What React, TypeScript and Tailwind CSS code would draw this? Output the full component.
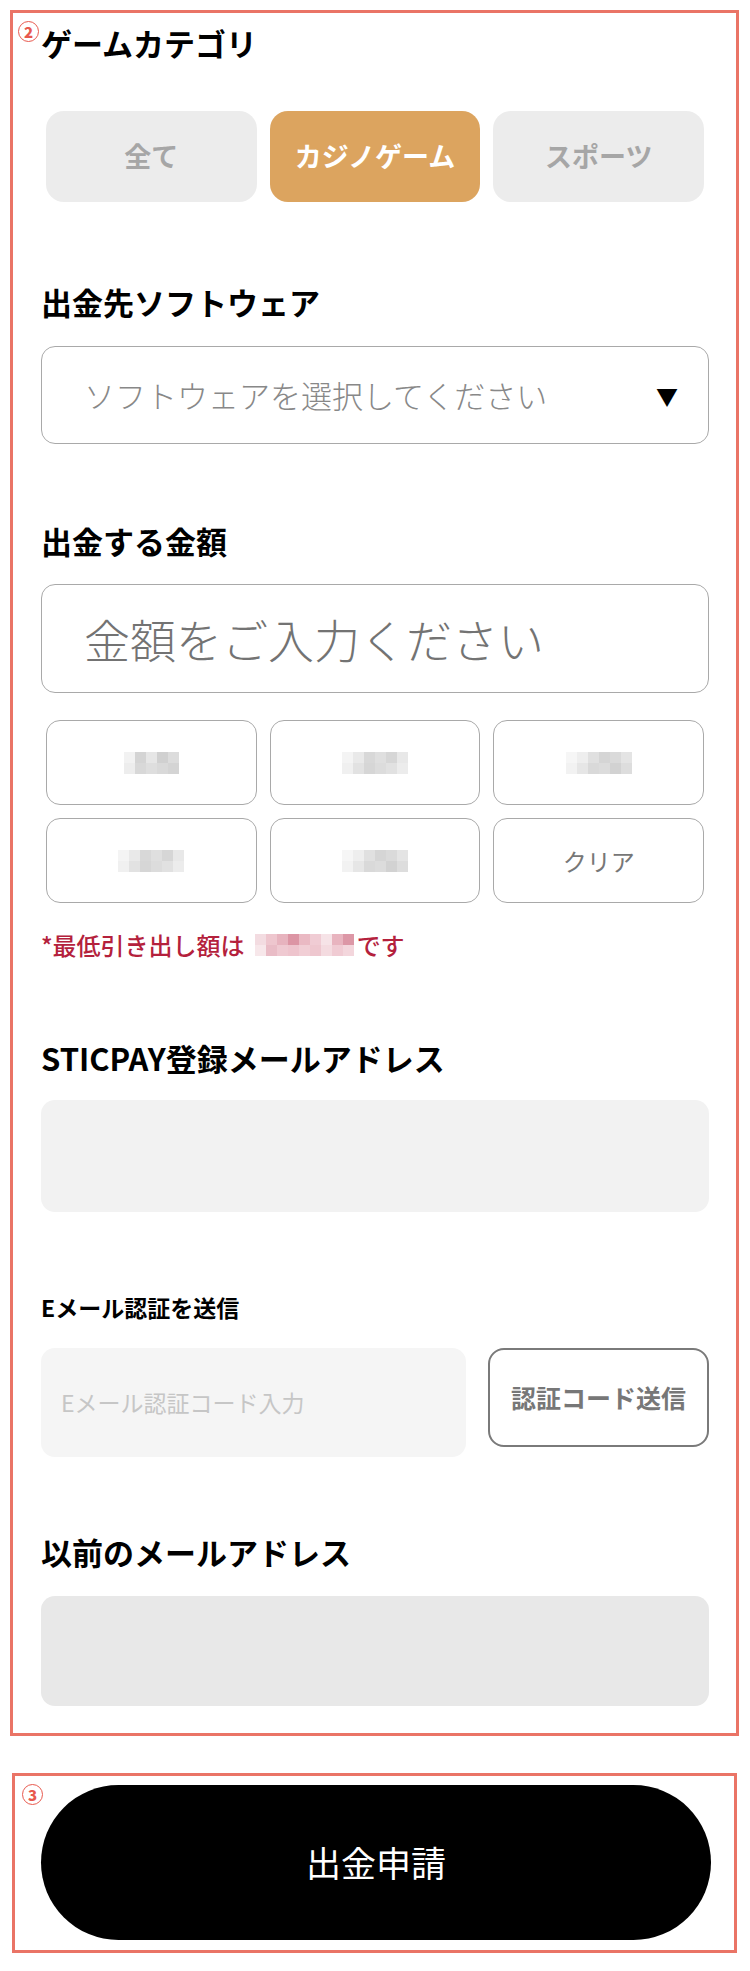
import React from 'react';

const jp = { fontFamily: '"Noto Sans CJK JP", "Noto Sans", sans-serif' };

// pixelated (censored) amount, drawn as little squares
function Mosaic({ cells }: { cells: string[][] }) {
  return (
    <div className="flex flex-col">
      {cells.map((row, i) => (
        <div key={i} className="flex">
          {row.map((c, j) => (
            <div key={j} className={`h-[11px] w-[11px] ${c}`} />
          ))}
        </div>
      ))}
    </div>
  );
}

const grayA = [
  ['bg-[#f2f2f2]', 'bg-[#d4d4d4]', 'bg-[#e6e6e6]', 'bg-[#d0d0d0]', 'bg-[#dcdcdc]'],
  ['bg-[#ededed]', 'bg-[#d8d8d8]', 'bg-[#dedede]', 'bg-[#d9d9d9]', 'bg-[#d4d4d4]'],
];
const grayB = [
  ['bg-[#f4f4f4]', 'bg-[#e9e9e9]', 'bg-[#d8d8d8]', 'bg-[#dfdfdf]', 'bg-[#d6d6d6]', 'bg-[#e8e8e8]'],
  ['bg-[#f0f0f0]', 'bg-[#e2e2e2]', 'bg-[#d6d6d6]', 'bg-[#dcdcdc]', 'bg-[#e1e1e1]', 'bg-[#ececec]'],
];
const grayC = [
  ['bg-[#f6f6f6]', 'bg-[#eeeeee]', 'bg-[#e0e0e0]', 'bg-[#d5d5d5]', 'bg-[#dadada]', 'bg-[#e4e4e4]'],
  ['bg-[#f2f2f2]', 'bg-[#e6e6e6]', 'bg-[#d9d9d9]', 'bg-[#dcdcdc]', 'bg-[#d2d2d2]', 'bg-[#dddddd]'],
];
const pink = [
  ['bg-[#f3dce1]', 'bg-[#eec6ce]', 'bg-[#e7b3be]', 'bg-[#dc95a4]', 'bg-[#eab9c3]', 'bg-[#f0ccd4]', 'bg-[#f6e3e7]', 'bg-[#e8b4bf]', 'bg-[#dc97a6]'],
  ['bg-[#f7e7ea]', 'bg-[#e9bcc6]', 'bg-[#efc9d1]', 'bg-[#eec4cd]', 'bg-[#f1ced5]', 'bg-[#eec7cf]', 'bg-[#f4dbe0]', 'bg-[#f0cbd3]', 'bg-[#f3d6dc]'],
];

function Circled({ n }: { n: string }) {
  return (
    <span className="flex h-[21px] w-[21px] items-center justify-center rounded-full border-[1.5px] border-[#e8594e] text-[15px] font-black leading-none text-[#e8594e]">
      {n}
    </span>
  );
}

function Title({ children }: { children: React.ReactNode }) {
  return <div className="text-[31px] font-bold leading-[37px] text-black">{children}</div>;
}

export default function App() {
  const amounts = [grayA, grayB, grayC, grayB, grayC];

  return (
    <div className="min-h-[1971px] w-[750px] bg-white" style={jp}>
      {/* form block */}
      <div className="relative ml-[10px] mt-[10px] w-[729px] border-[3px] border-[#ea7466] pb-[27px] pl-[28px] pr-[27px] pt-[11px]">
        <div className="absolute left-[5px] top-[8px]">
          <Circled n="2" />
        </div>

        <Title>ゲームカテゴリ</Title>
        <div className="mt-[50px] grid grid-cols-3 gap-[13px] px-[5px]">
          <button className="h-[91px] rounded-[18px] bg-[#ececec] text-[27px] font-bold text-[#a6a6a6]">全て</button>
          <button className="h-[91px] rounded-[18px] bg-[#dca45f] text-[27px] font-bold text-white">カジノゲーム</button>
          <button className="h-[91px] rounded-[18px] bg-[#ececec] text-[27px] font-bold text-[#a6a6a6]">スポーツ</button>
        </div>

        <div className="mt-[81px]">
          <Title>出金先ソフトウェア</Title>
        </div>
        <div className="mt-[26px] flex h-[98px] items-center justify-between rounded-[14px] border-[1.5px] border-[#a9a9a9] pl-[42px] pr-[30px]">
          <span className="text-[31px] font-light text-[#888888]">ソフトウェアを選択してください</span>
          <span className="text-[22px] text-black">▼</span>
        </div>

        <div className="mt-[78px]">
          <Title>出金する金額</Title>
        </div>
        <div className="mt-[25px] flex h-[109px] items-center rounded-[14px] border-[1.5px] border-[#a9a9a9] pl-[42px]">
          <span className="text-[46px] font-light text-[#737373]">金額をご入力ください</span>
        </div>

        <div className="mt-[27px] grid grid-cols-3 gap-[13px] px-[5px]">
          {amounts.map((m, i) => (
            <div key={i} className="flex h-[85px] items-center justify-center rounded-[14px] border-[1.5px] border-[#a9a9a9]">
              <Mosaic cells={m} />
            </div>
          ))}
          <div className="flex h-[85px] items-center justify-center rounded-[14px] border-[1.5px] border-[#a9a9a9] text-[24px] text-[#777777]">
            クリア
          </div>
        </div>

        <div className="mt-[27px] flex items-center text-[24px] font-medium leading-[29px] text-[#b4213c]">
          <span>*最低引き出し額は</span>
          <span className="ml-[10px] mr-[3px]">
            <Mosaic cells={pink} />
          </span>
          <span>です</span>
        </div>

        <div className="mt-[80px]">
          <Title>STICPAY登録メールアドレス</Title>
        </div>
        <div className="mt-[24px] h-[112px] rounded-[14px] bg-[#f2f2f2]" />

        <div className="mt-[81px] text-[23px] font-bold leading-[29px] text-black">Eメール認証を送信</div>
        <div className="mt-[26px] flex items-start gap-[22px]">
          <div className="flex h-[109px] w-[425px] items-center rounded-[14px] bg-[#f5f5f5] pl-[20px]">
            <span className="text-[23px] text-[#c6c6c6]">Eメール認証コード入力</span>
          </div>
          <button className="flex h-[99px] flex-1 items-center justify-center rounded-[16px] border-2 border-[#7a7a7a] text-[25px] font-bold text-[#777777]">
            認証コード送信
          </button>
        </div>

        <div className="mt-[76px]">
          <Title>以前のメールアドレス</Title>
        </div>
        <div className="mt-[26px] h-[110px] rounded-[14px] bg-[#e8e8e8]" />
      </div>

      {/* submit block */}
      <div className="relative ml-[12px] mt-[37px] w-[725px] border-[3px] border-[#ea7466] pb-[10px] pl-[26px] pr-[23px] pt-[9px]">
        <div className="absolute left-[7px] top-[8px]">
          <Circled n="3" />
        </div>
        <button className="flex h-[155px] w-full items-center justify-center rounded-full bg-black text-[35px] font-normal text-white">
          出金申請
        </button>
      </div>
    </div>
  );
}
